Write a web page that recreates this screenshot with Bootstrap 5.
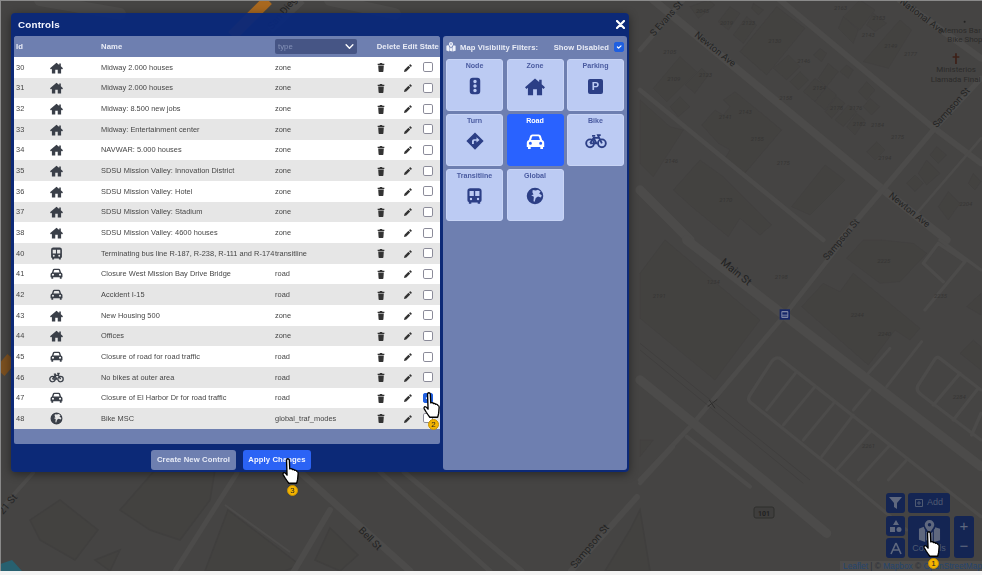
<!DOCTYPE html>
<html lang="en">
<head>
<meta charset="utf-8">
<title>Controls</title>
<link href="https://cdn.jsdelivr.net/npm/bootstrap@5.3.0/dist/css/bootstrap.min.css" rel="stylesheet">
<style>
html,body{margin:0;height:575px;overflow:hidden;background:#f4f4f4;font-family:"Liberation Sans",Arial,sans-serif;}
.map-stage{position:relative;width:982px;height:571px;overflow:hidden;background:#454443;border-top:1px solid #8a8a8a;border-left:1px solid #8a8a8a;}
.map-art{position:absolute;left:-1px;top:-1px;}
.map-art .rd{fill:none;stroke:#4c4b4a;stroke-linecap:round;stroke-linejoin:round;}
.map-art .bl{fill:#434240;stroke:#403f3e;stroke-width:1.5;}
.map-art .lbl{fill:#232323;font-family:"Roboto",sans-serif;font-size:10px;}
.map-art .num{fill:#363534;font-family:"Roboto",sans-serif;font-size:18px;font-style:italic;}
.ctl-dialog{position:absolute;left:10px;top:12px;width:618px;height:459px;background:rgba(10,40,122,.95);border-radius:4px;box-shadow:0 2px 10px rgba(0,0,0,.45);color:#fff;will-change:transform;}
.ctl-head{height:23px;flex:none;padding:0 4px 0 7px;}
.ctl-title{font-size:9.8px;font-weight:700;letter-spacing:.2px;margin:0;color:#f4f6ff;}
.ctl-close{display:block;width:9px;height:9px;padding:0;border:0;background:none;line-height:0;}
.ctl-body{padding-left:3px;gap:3px;}
.ctl-left{width:426px;}
.ctl-panel{height:408px;background:#6e7fb0;border-radius:3px 3px 2px 2px;overflow:hidden;}
.ctl-table{width:426px;table-layout:fixed;border-collapse:collapse;margin:0;font-size:7.4px;letter-spacing:.03px;color:#454545;}
.ctl-table th{height:21px;padding:0 0 0 2px;font-size:7.7px;font-weight:700;letter-spacing:.1px;color:#e9ecf6;background:#6e7fb0;vertical-align:middle;white-space:nowrap;border:0;}
.ctl-table td{height:20.66px;padding:0 0 0 2px;vertical-align:middle;white-space:nowrap;border:0;background:#fff;}
.ctl-table tbody tr:nth-child(even) td{background:#e6e6e6;}
.ctl-table .ci{padding:0;text-align:center;}
.ctl-table svg{display:inline-block;vertical-align:middle;}
.type-pick{width:82px;height:15px;min-height:15px;padding:0 0 0 3px;font-size:7.8px;line-height:15px;color:#8592b8;background-color:#465585;border:0;border-radius:2px;background-size:9px 9px;background-position:right 3px center;background-image:url("data:image/svg+xml,%3csvg xmlns='http://www.w3.org/2000/svg' viewBox='0 0 16 16'%3e%3cpath fill='none' stroke='%23fff' stroke-linecap='round' stroke-linejoin='round' stroke-width='2.5' d='m2 5 6 6 6-6'/%3e%3c/svg%3e");}
.box-tick{width:10px;height:10px;margin:0;border:1px solid #8b8b99;border-radius:2px;display:block;}
.box-tick:checked{background-color:#1f5fe0;border-color:#1f5fe0;}
.ctl-foot{height:21px;margin-top:5px;gap:7px;padding-left:8px;}
.foot-btn{height:20px;padding:0;font-size:7.7px;font-weight:700;letter-spacing:.1px;line-height:20px;border:0;border-radius:3px;color:#e6eaf6;white-space:nowrap;}
.foot-new{width:85px;background:#6e7fb0;}
.foot-apply{width:68px;background:#2b63f5;color:#f2f5ff;}
.flt-panel{width:184px;height:434px;background:#6e7fb0;border-radius:3px;padding:0 3px;}
.flt-head{height:23px;font-size:7.6px;font-weight:700;letter-spacing:.1px;color:#e9ecf6;white-space:nowrap;}
.flt-grid{display:grid;grid-template-columns:57px 57px 57px;grid-auto-rows:51.5px;gap:3.5px;}
.flt-tile{background:#bccbf3;border:1px solid #c8d4f5;border-radius:3px;color:#4a5ba0;font-size:7.1px;line-height:9px;font-weight:700;text-align:center;padding-top:2px;}
.flt-ico{height:20px;margin-top:5px;display:flex;align-items:center;justify-content:center;color:#2c3f86;}
.flt-on{background:#2962ff;border-color:#2962ff;color:#fff;}
.flt-on .flt-ico{color:#fff;}
.park-mark{display:block;width:15px;height:15px;background:#2c3f86;border-radius:2px;color:#bccbf3;font-size:11px;line-height:15px;}
.map-btn{position:absolute;background:#142553;border-radius:3px;color:#4f5a72;font-size:9px;}
.map-btn svg{display:block;}
.map-attrib{position:absolute;right:0;top:560px;font-size:8.3px;line-height:10px;color:#2b2f38;background:#4d4c4b;padding:0 0 0 3px;white-space:nowrap;}
.map-attrib b{font-weight:400;color:#24456f;}
.tap{position:absolute;width:18px;height:38px;}
.tap-num{position:absolute;left:5px;top:26.5px;width:11px;height:11px;border-radius:50%;background:#f4b400;color:#222;font-size:8px;line-height:9px;text-align:center;border:1px solid #c89300;}
.tap svg{position:absolute;left:0;top:0;}
</style>
</head>
<body>
<svg width="0" height="0" class="d-none">
<defs>
<symbol id="i-house" viewBox="0 0 24 24"><path fill="currentColor" d="M12 3 0 13.6l1.8 2 1.7-1.5V23h6.2v-7h4.6v7h6.2v-8.900l1.7 1.500 1.800-2L20 9.900V4.500h-3v2.700z"/></symbol>
<symbol id="i-car" viewBox="0 0 24 24"><path fill="currentColor" fill-rule="evenodd" d="M5.200 5Q5.800 3 8 3h8q2.200 0 2.800 2l1.600 5q2.600 1 2.600 3.600V19h-1.500v2.500h-3.400V19H5.900v2.500H2.500V19H1v-5.400Q1 11 3.600 10zM6.400 10h11.200l-1.200-4q-.2-.6-.9-.6H8.500q-.7 0-.9.600zM5.500 12.400a1.900 1.900 0 1 0 0 3.800 1.900 1.900 0 0 0 0-3.800zm13 0a1.900 1.900 0 1 0 0 3.800 1.900 1.900 0 0 0 0-3.800z"/></symbol>
<symbol id="i-bus" viewBox="0 0 24 24"><path fill="currentColor" fill-rule="evenodd" d="M6 1h12q4 0 4 4v13q0 2-2 2.500V23h-3.500v-2h-9v2H4v-2.500Q2 20 2 18V5q0-4 4-4zM5 5v7h6V5zm8 0v7h6V5zM7 14.500a1.700 1.700 0 1 0 0 3.400 1.700 1.700 0 0 0 0-3.400zm10 0a1.700 1.700 0 1 0 0 3.400 1.700 1.700 0 0 0 0-3.400z"/></symbol>
<symbol id="i-bike" viewBox="0 0 28 20"><g fill="none" stroke="currentColor" stroke-width="2.400"><circle cx="6.500" cy="13" r="5"/><circle cx="21.500" cy="13" r="5"/><path d="M6.500 13 11 6h7l3.500 7M11 6l3.500 7h-8M18 6l-1.500-3.500h3.500M9 3.500h4"/></g></symbol>
<symbol id="i-globe" viewBox="0 0 24 24"><path fill="currentColor" fill-rule="evenodd" d="M12 1a11 11 0 1 0 0 22 11 11 0 0 0 0-22zM9 4l4 .5 3-1 3.500 2.500-2 2.500 3.500 2.500-1 3-4-1.500-3 2-1.500 5-1.500-.5.500-6-3.500-2 3-1-1.500-3z"/></symbol>
<symbol id="i-light" viewBox="0 0 16 24"><path fill="currentColor" fill-rule="evenodd" d="M5 1h6q4 0 4 4v14q0 4-4 4H5q-4 0-4-4V5q0-4 4-4zm3 2.800a2.300 2.300 0 1 0 0 4.600 2.300 2.300 0 0 0 0-4.600zm0 6a2.300 2.300 0 1 0 0 4.600 2.300 2.300 0 0 0 0-4.600zm0 6a2.300 2.300 0 1 0 0 4.600 2.300 2.300 0 0 0 0-4.600z"/></symbol>
<symbol id="i-turn" viewBox="0 0 24 24"><path fill="currentColor" fill-rule="evenodd" d="M12 .5 23.500 12 12 23.500.5 12zM14 7v2.500h-3.500Q8 9.500 8 12v4h2.500v-3.500q0-.8.800-.8H14V14l4-3.500z"/></symbol>
<symbol id="i-trash" viewBox="0 0 14 16"><path fill="currentColor" d="M5 0h4l.5 1.500H13V3.500H1V1.500h3.500zM2 4.500h10l-.7 10.300q-.1 1.200-1.300 1.200H4q-1.200 0-1.300-1.200z"/></symbol>
<symbol id="i-pen" viewBox="0 0 16 16"><path fill="currentColor" d="M11.600.9q.9-.9 1.800 0l1.700 1.700q.9.900 0 1.800l-1.500 1.500-3.500-3.500zM9 3.500 12.500 7 4.500 15 0 16l1-4.500z"/></symbol>
<symbol id="i-map" viewBox="0 0 24 24"><path fill="currentColor" fill-rule="evenodd" d="M12 0a5 5 0 0 0-5 5c0 2.500 3.500 6.800 5 8.500 1.500-1.700 5-6 5-8.500a5 5 0 0 0-5-5zm0 3.200a1.800 1.800 0 1 1 0 3.600 1.800 1.800 0 0 1 0-3.600zM1 9l5-2q.2 1.500 1.500 3.500V23L1 20.500zM8.500 12 12 15.500l3.500-3.500V23l-7-2zM16.500 10.500Q18 8.500 18 7.500l5 1.500v12l-6.500 2z"/></symbol>
<symbol id="i-hand" viewBox="0 0 17 26"><path fill="#fff" stroke="#000" stroke-width="1.300" stroke-linejoin="round" d="M4.200 2Q4.400.7 5.500.7T6.900 2l.4 8.500 1-.2q1.400-.1 1.600.8 1.500-.4 2 .7 1.700-.3 2.200 1 1.200.2 1.300 1.800l-.5 6q-.4 2-1 3.700H6.400Q5 22.500 3 19.500L.9 16Q.4 14.700 1.500 14.200q1.200-.4 3.200 2.300z"/></symbol>
</defs>
</svg>

<div class="map-stage">
  <svg class="map-art" width="982" height="572" viewBox="0 0 982 572">
    <path d="M268 0 232 36" fill="none" stroke="#a8681f" stroke-width="11"/>
    <path d="M302 0 270 30" fill="none" stroke="#4e4d4c" stroke-width="8"/>
    <path d="M0 372 12 358" fill="none" stroke="#7a4f20" stroke-width="12"/>
    <path d="M0 571V564L12 560 22 571z" fill="#27606f"/>
    <text class="lbl" transform="translate(272 30) rotate(-50)">San Diego-Co</text>
    <path class="rd" stroke-width="12" d="M40 0 120 14"/><path class="rd" stroke-width="12" d="M330 0 395 14"/>

    <g transform="translate(640 0) scale(.3333)">
      <path class="bl" d="M410 20 495 85 380 225 300 155z"/><path class="bl" d="M150 20 205 0 225 15 175 55z"/><path class="bl" d="M270 20 300 40 265 90 235 65z"/><path class="bl" d="M320 50 350 75 310 130 280 105z"/><path class="bl" d="M340 10 370 30 355 45 335 25z"/>
      <path class="bl" d="M120 170 170 215 80 305 40 265z"/><path class="bl" d="M185 205 205 225 165 280 135 255z"/><path class="bl" d="M120 290 150 320 115 350 90 320z"/>
      <path class="bl" d="M285 275 365 340 425 390 310 525 255 475 270 450 235 430 185 375 225 330 250 345 270 320 250 300z"/>
      <path class="bl" d="M0 300 90 380 130 390 40 530 0 490z"/><path class="bl" d="M180 480 250 530 395 675 360 705 300 655 265 710 155 620 100 570z"/><path class="bl" d="M555 495 615 540 510 645 455 620z"/>
      <path class="bl" d="M445 165 480 200 440 240 400 205z"/><path class="bl" d="M540 145 560 160 545 185 520 165z"/><path class="bl" d="M565 190 595 215 560 260 535 235z"/><path class="bl" d="M620 195 640 210 625 235 600 215z"/><path class="bl" d="M480 215 505 240 475 270 450 245z"/><path class="bl" d="M525 235 560 260 525 305 490 275z"/><path class="bl" d="M560 260 590 285 555 330 525 305z"/><path class="bl" d="M590 290 615 310 575 355 555 335z"/><path class="bl" d="M625 315 650 335 610 380 585 360z"/><path class="bl" d="M650 340 675 360 645 405 620 380z"/><path class="bl" d="M680 245 705 270 680 300 655 275z"/><path class="bl" d="M690 295 720 320 695 345 670 320z"/><path class="bl" d="M710 425 735 450 705 480 680 455z"/>
      <path class="bl" d="M780 60 815 90 745 205 670 185z"/><path class="bl" d="M660 0 705 30 660 90 610 50z"/><path class="bl" d="M610 50 655 90 640 130 595 85z"/><path class="bl" d="M700 40 740 70 705 95 680 75z"/><path class="bl" d="M890 440 920 465 895 490 870 465z"/><path class="bl" d="M860 480 900 520 860 555 835 520z"/><path class="bl" d="M825 525 850 550 825 575 800 550z"/><path class="bl" d="M925 575 960 610 925 660 895 620z"/><path class="bl" d="M1000 520 1023 545 1005 570 985 550z"/>
      <path class="rd" stroke-width="24" d="M40 0 730 570 920 720"/>
      <path class="rd" stroke-width="18" d="M420 0 870 375 1023 490"/>
      <path class="rd" stroke-width="20" d="M780 0 1023 175"/>
      <path class="rd" stroke-width="14" d="M0 270 550 720"/>
      <path class="rd" stroke-width="28" d="M0 570 150 720"/>
      <path class="rd" stroke-width="16" d="M1023 235 880 390 600 720"/>
      <path class="rd" stroke-width="14" d="M130 0 0 150"/>
      <path class="rd" stroke-width="8" d="M1023 415 830 640"/>
      <text class="lbl" style="font-size:28px" transform="translate(162 108) rotate(39)">Newton Ave</text>
      <text class="lbl" style="font-size:28px" transform="translate(745 590) rotate(39)">Newton Ave</text>
      <text class="lbl" style="font-size:28px" transform="translate(42 110) rotate(-48)">S Evans St</text>
      <text class="lbl" style="font-size:28px" transform="translate(778 8) rotate(37)">National Ave</text>
      <text class="lbl" style="font-size:28px" transform="translate(890 385) rotate(-48)">Sampson St</text>
      <text class="lbl" style="font-size:24px;fill:#2c2b2a" x="900" y="98">Memos Bar</text>
      <text class="lbl" style="font-size:24px;fill:#2c2b2a" x="922" y="127">Bike Shop</text>
      <text class="lbl" style="font-size:24px;fill:#2c2b2a" x="889" y="217">Ministerios</text>
      <text class="lbl" style="font-size:24px;fill:#2c2b2a" x="872" y="247">Llamada Final</text>
      <path d="M948 160v32M938 171h20" stroke="#3d2018" stroke-width="5" fill="none"/>
      <circle cx="974" cy="65" r="3" fill="#222"/>
      <text class="num" x="385" y="128">2130</text><text class="num" x="472" y="188">2146</text><text class="num" x="418" y="300">2158</text><text class="num" x="518" y="271">2154</text><text class="num" x="236" y="358">2141</text><text class="num" x="296" y="342">2143</text><text class="num" x="332" y="423">2155</text><text class="num" x="410" y="495">2175</text><text class="num" x="75" y="490">2146</text><text class="num" x="238" y="606">2170</text><text class="num" x="570" y="330">2178</text><text class="num" x="628" y="330">2176</text><text class="num" x="638" y="378">2182</text><text class="num" x="693" y="382">2184</text><text class="num" x="753" y="417">2175</text><text class="num" x="715" y="480">2194</text><text class="num" x="792" y="167">2177</text><text class="num" x="733" y="144">2149</text><text class="num" x="665" y="110">2143</text><text class="num" x="697" y="60">2153</text><text class="num" x="582" y="30">2163</text><text class="num" x="168" y="38">2045</text><text class="num" x="240" y="76">2019</text><text class="num" x="306" y="75">2123</text><text class="num" x="70" y="162">2105</text><text class="num" x="82" y="242">2109</text><text class="num" x="177" y="230">2123</text><text class="num" x="958" y="617">2204</text>
    </g>

    <g transform="translate(640 240) scale(.3333)">
      <path class="bl" d="M75 0 360 240 225 420 0 235V100z"/><path class="bl" d="M640 100 840 265 810 300 765 270 685 375 485 200 550 130 600 155z"/><path class="bl" d="M620 55 720 130 780 125 860 40 820 10 725 0 670 0z"/><path class="bl" d="M960 340 1000 300 1023 320 1023 390z"/><path class="bl" d="M980 200 1023 160 1023 225z"/><path class="bl" d="M0 600 40 600 0 650z"/>
      <path class="rd" stroke-width="28" d="M140 0 1023 680"/>
      <path class="rd" stroke-width="14" d="M610 0 430 230 160 550 0 720"/>
      <path class="rd" stroke-width="28" d="M0 420 370 720 560 880"/>
      <path class="rd" stroke-width="12" d="M140 590 330 740"/>
      <path class="rd" stroke-width="12" d="M100 620 0 730"/>
      <path d="M0 310 510 720M0 330 490 730" stroke="#3a3938" stroke-width="1.500" fill="none"/>
      <path class="rd" stroke-width="10" d="M420 355Q405 350 395 365L330 465Q320 480 335 490L620 720 800 870M420 355 1023 830"/>
      <path class="rd" stroke-width="9" d="M470 395 380 510M525 440 430 555M585 485 490 600M640 525 545 650M695 570 590 690M750 615 655 720M800 660 745 720M690 450 640 510M750 325 685 400M845 305 740 440"/>
      <path class="rd" stroke-width="10" d="M900 355Q890 345 880 365L835 435Q825 450 845 465L1023 600M900 355 1023 450M960 400 880 495M1015 445 940 540M1023 520 995 585M895 10 850 70 910 125M895 10 970 60M975 65 855 210M900 0 1023 90"/>
      <path d="M203 500 232 478M208 480 225 505" stroke="#2f2e2d" stroke-width="3" fill="none"/>
      <rect x="419" y="208" width="31" height="31" fill="#152668"/>
      <rect x="424" y="213" width="21" height="21" rx="3" fill="#7f87a6"/><rect x="427" y="217" width="15" height="7" fill="#152668"/><rect x="427" y="227" width="15" height="3" fill="#152668"/>
      <text class="lbl" style="font-size:32px" transform="translate(240 70) rotate(39)">Main St</text>
      <text class="lbl" style="font-size:28px" transform="translate(562 62) rotate(-50)">Sampson St</text>
      <text class="num" x="404" y="117">2198</text><text class="num" x="200" y="131">1234</text><text class="num" x="38" y="175">2191</text><text class="num" x="632" y="230">2244</text><text class="num" x="712" y="70">2225</text><text class="num" x="714" y="289">2240</text><text class="num" x="882" y="175">2235</text><text class="num" x="938" y="478">2284</text><text class="num" x="666" y="624">2261</text>
    </g>

    <g>
      <path class="bl" d="M30 520 60 500 98 530 75 560 40 540zM95 560 120 550 110 571z"/>
      <path class="bl" d="M120 510 155 470 215 470 210 500 180 540 150 530z"/>
      <path class="bl" d="M228 510 300 565 285 571 205 571z"/>
      <path class="bl" d="M330 528 358 555 340 571 315 560z"/>
      <path class="bl" d="M630 530 640 510 650 571H605z"/>
      <path class="rd" stroke-width="5" d="M237 473 175 571"/>
      <path class="rd" stroke-width="6" d="M330 510 294 571"/>
      <path class="rd" stroke-width="7" d="M300 472 410 571"/>
      <path class="rd" stroke-width="4" d="M33 473 0 510"/>
      <path class="rd" stroke-width="5" d="M380 472 490 571M404 472 522 571"/>
      <path class="rd" stroke-width="6" d="M637 497 571 571"/>
      <path d="M225 505 290 552" stroke="#4c4b4a" stroke-width="2" fill="none"/>
      <text class="lbl" transform="translate(358 531) rotate(45)">Bell St</text>
      <text class="lbl" transform="translate(575 569) rotate(-50)">Sampson St</text>
      <text class="lbl" transform="translate(3 515) rotate(-50)">21 St</text>
    </g>
    <g transform="translate(754 507)"><rect width="20" height="11" rx="2" fill="#3f3e3d" stroke="#2f2e2d"/><text x="10" y="8.500" font-size="7" text-anchor="middle" fill="#222" font-family="Roboto,sans-serif" font-weight="700">101</text></g>
  </svg>

  <div class="map-btn" style="left:885px;top:492px;width:19px;height:20px"><svg class="mx-auto mt-1" width="13" height="12" viewBox="0 0 13 12"><path fill="#5f687e" d="M0 0h13L8 6v6L5 10V6z"/></svg></div>
  <div class="map-btn d-flex align-items-center justify-content-center gap-1" style="left:907px;top:492px;width:42px;height:20px"><svg width="8" height="8" viewBox="0 0 8 8"><path fill="none" stroke="#4f5a72" d="M.5.5h7v7h-7zM4 2v4M2 4h4"/></svg><span>Add</span></div>
  <div class="map-btn" style="left:885px;top:515px;width:19px;height:20px"><svg class="mx-auto mt-1" width="12" height="12" viewBox="0 0 12 12"><path fill="#5f687e" d="M6 0l3 5H3zM0 7h5v5H0z"/><circle cx="9" cy="9.500" r="2.500" fill="#5f687e"/></svg></div>
  <div class="map-btn" style="left:885px;top:537px;width:19px;height:20px"><svg class="mx-auto mt-1" width="12" height="13" viewBox="0 0 12 13"><path fill="none" stroke="#5f687e" stroke-width="1.600" d="M6 1 1 12M6 1l5 11M3 8h6"/></svg></div>
  <div class="map-btn text-center" style="left:907px;top:515px;width:42px;height:42px"><svg class="mx-auto mt-1" width="23" height="23" viewBox="0 0 24 24" style="color:#5f687e"><use href="#i-map"/></svg><span class="d-block" style="line-height:11px">Controls</span></div>
  <div class="map-btn text-center" style="left:953px;top:515px;width:20px;height:42px;font-size:15px;line-height:20px;color:#5f687e">+<br>&minus;</div>
  <div class="map-attrib"><b>Leaflet</b> | © <b>Mapbox</b> © <b>OpenStreetMap</b></div>

  <div class="ctl-dialog d-flex flex-column">
    <div class="ctl-head d-flex align-items-center justify-content-between">
      <h5 class="ctl-title">Controls</h5>
      <button type="button" class="ctl-close" aria-label="Close"><svg width="9" height="9" viewBox="0 0 9 9"><path d="M1 1l7 7M8 1 1 8" stroke="#fff" stroke-width="2.200" stroke-linecap="round"/></svg></button>
    </div>
    <div class="ctl-body d-flex">
      <div class="ctl-left">
        <div class="ctl-panel">
          <table class="ctl-table">
            <colgroup><col style="width:26px"><col style="width:32px"><col style="width:27px"><col style="width:174px"><col style="width:93px"><col style="width:30px"><col style="width:24px"><col style="width:16px"><col></colgroup>
            <thead><tr><th>Id</th><th></th><th></th><th>Name</th><th><select class="form-select type-pick" aria-label="type"><option>type</option></select></th><th colspan="4" class="text-end" style="padding-right:1px">Delete Edit State</th></tr></thead>
            <tbody id="ctl-rows"></tbody>
          </table>
        </div>
        <div class="ctl-foot d-flex justify-content-center align-items-center">
          <button type="button" class="btn foot-btn foot-new">Create New Control</button>
          <button type="button" class="btn foot-btn foot-apply">Apply Changes</button>
        </div>
      </div>
      <div class="flt-panel">
        <div class="flt-head d-flex align-items-center justify-content-between">
          <span class="d-flex align-items-center gap-1"><svg width="10" height="10" viewBox="0 0 24 24" style="color:#eef1fa"><use href="#i-map"/></svg>Map Visibility Filters:</span>
          <span class="d-flex align-items-center" style="gap:5px">Show Disabled <input class="form-check-input box-tick" type="checkbox" checked aria-label="Show Disabled"></span>
        </div>
        <div class="flt-grid">
          <div class="flt-tile">Node<div class="flt-ico"><svg width="12" height="18" viewBox="0 0 16 24"><use href="#i-light"/></svg></div></div>
          <div class="flt-tile">Zone<div class="flt-ico"><svg width="20" height="20" viewBox="0 0 24 24"><use href="#i-house"/></svg></div></div>
          <div class="flt-tile">Parking<div class="flt-ico"><span class="park-mark">P</span></div></div>
          <div class="flt-tile">Turn<div class="flt-ico"><svg width="18" height="18" viewBox="0 0 24 24"><use href="#i-turn"/></svg></div></div>
          <div class="flt-tile flt-on">Road<div class="flt-ico"><svg width="19" height="19" viewBox="0 0 24 24"><use href="#i-car"/></svg></div></div>
          <div class="flt-tile">Bike<div class="flt-ico"><svg width="22" height="16" viewBox="0 0 28 20"><use href="#i-bike"/></svg></div></div>
          <div class="flt-tile">Transitline<div class="flt-ico"><svg width="17" height="18" viewBox="0 0 24 24"><use href="#i-bus"/></svg></div></div>
          <div class="flt-tile">Global<div class="flt-ico"><svg width="18" height="18" viewBox="0 0 24 24"><use href="#i-globe"/></svg></div></div>
        </div>
      </div>
    </div>
  </div>

  <div class="tap" style="left:422px;top:391px"><svg width="18" height="27" viewBox="0 0 17 26"><use href="#i-hand"/></svg><span class="tap-num">2</span></div>
  <div class="tap" style="left:281px;top:457px"><svg width="18" height="27" viewBox="0 0 17 26"><use href="#i-hand"/></svg><span class="tap-num">3</span></div>
  <div class="tap" style="left:922px;top:530px"><svg width="18" height="27" viewBox="0 0 17 26"><use href="#i-hand"/></svg><span class="tap-num">1</span></div>
</div>
<script>
var data=[[30,'house','Midway 2.000 houses','zone'],[31,'house','Midway 2.000 houses','zone'],[32,'house','Midway: 8.500 new jobs','zone'],[33,'house','Midway: Entertainment center','zone'],[34,'house','NAVWAR: 5.000 houses','zone'],[35,'house','SDSU Mission Valley: Innovation District','zone'],[36,'house','SDSU Mission Valley: Hotel','zone'],[37,'house','SDSU Mission Valley: Stadium','zone'],[38,'house','SDSU Mission Valley: 4600 houses','zone'],[40,'bus','Terminating bus line R-187, R-238, R-111 and R-174','transitline'],[41,'car','Closure West Mission Bay Drive Bridge','road'],[42,'car','Accident I-15','road'],[43,'house','New Housing 500','zone'],[44,'house','Offices','zone'],[45,'car','Closure of road for road traffic','road'],[46,'bike','No bikes at outer area','road'],[47,'car','Closure of El Harbor Dr for road traffic','road'],[48,'globe','Bike MSC','global_traf_modes']];
var html='';
data.forEach(function(r){
  var vb=r[1]=='bike'?'0 0 28 20':'0 0 24 24',w=r[1]=='bike'?15:13,h=r[1]=='bike'?11:13;
  html+='<tr><td>'+r[0]+'</td><td class="ci" style="color:#3a3f48"><svg width="'+w+'" height="'+h+'" viewBox="'+vb+'"><use href="#i-'+r[1]+'"/></svg></td><td></td><td>'+r[2]+'</td><td>'+r[3]+'</td>'
  +'<td class="ci" style="color:#333"><svg width="8" height="9" viewBox="0 0 14 16"><use href="#i-trash"/></svg></td>'
  +'<td class="ci" style="color:#333"><svg width="8" height="8" viewBox="0 0 16 16"><use href="#i-pen"/></svg></td>'
  +'<td class="ci"><input class="form-check-input box-tick mx-auto" type="checkbox" aria-label="State"'+(r[0]==47?' checked':'')+'></td><td></td></tr>';
});
document.getElementById('ctl-rows').innerHTML=html;
</script>
<script src="https://cdn.jsdelivr.net/npm/bootstrap@5.3.0/dist/js/bootstrap.bundle.min.js"></script>
</body>
</html>
